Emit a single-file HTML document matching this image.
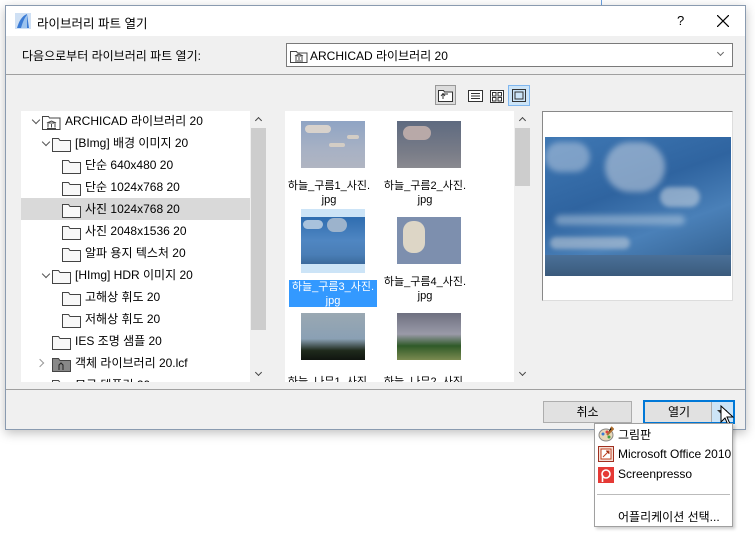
<!DOCTYPE html>
<html><head><meta charset="utf-8"><style>
*{box-sizing:border-box;margin:0;padding:0}
body{width:755px;height:533px;background:#fff;position:relative;overflow:hidden;font-family:"Liberation Sans","Noto Sans CJK KR",sans-serif;font-size:12px;color:#000}
.a{position:absolute}
.dlg{left:5px;top:5px;width:741px;height:425px;border:1px solid #8a9bb0;background:#f0f0f0;box-shadow:0 3px 10px rgba(0,0,0,.25)}
.tb{left:0;top:0;width:739px;height:30px;background:#fff}
.row{position:absolute;height:22px;line-height:22px;white-space:nowrap}
.fold{position:absolute}
.chev{position:absolute;width:6px;height:6px;border-right:1.5px solid #555;border-bottom:1.5px solid #555;transform:rotate(45deg)}
.th{position:absolute;width:64px;height:47px;overflow:hidden}
.cap{position:absolute;width:90px;text-align:center;line-height:14px;font-size:11px;white-space:nowrap}
</style></head><body>
<div class="a" style="left:601px;top:0;width:1px;height:5px;background:#6aa0e0"></div>
<div class="a dlg">
 <div class="a tb"></div>
 <svg class="a" style="left:9px;top:7px" width="16" height="16"><rect width="16" height="16" fill="#cfe0f4"/><path d="M2 15 C4 8 7 3 12 1 L14 15Z" fill="#3a7bd5"/><path d="M6 15 C8 8 10 4 12 2 L12 15Z" fill="#9cc3ee"/></svg>
 <div class="a" style="left:31px;top:7px;font-size:12.5px">라이브러리 파트 열기</div>
 <div class="a" style="left:671px;top:7px;font-size:13px">?</div>
 <svg class="a" style="left:711px;top:9px" width="12" height="12"><path d="M0 0L12 12M12 0L0 12" stroke="#000" stroke-width="1.2"/></svg>
 <div class="a" style="left:16px;top:41px">다음으로부터 라이브러리 파트 열기:</div>
 <div class="a" style="left:280px;top:37px;width:447px;height:24px;background:#fff;border:1px solid #7a7a7a"></div>
 <svg class="a" style="left:284px;top:43px" width="18" height="14"><path d="M.5 2.5h6l1 1.5h9.5v9.5h-16.5z" fill="#fff" stroke="#444"/><path d="M5 7l4-2 4 2zM6 8v3M9 8v3M12 8v3M5 12h8" stroke="#444" fill="none"/></svg>
 <div class="a" style="left:304px;top:41px">ARCHICAD 라이브러리 20</div>
 <div class="chev" style="left:712px;top:44px;width:5px;height:5px;border-color:#666;border-width:1px"></div>
 <div class="a" style="left:0;top:68px;width:739px;height:1px;background:#a0a0a0"></div>
 <!-- toolbar -->
 <div class="a" style="left:429px;top:79px;width:21px;height:20px;border:1px solid #999;background:#dcdcdc"></div>
 <svg class="a" style="left:432px;top:83px" width="16" height="13"><path d="M.5 1.5h5l1 1.5h8v9.5H.5z" fill="#fff" stroke="#333"/><path d="M5 10V5h5M3 7l2-2.5 2 2.5" stroke="#333" fill="none"/></svg>
 <svg class="a" style="left:462px;top:84px" width="15" height="12"><rect x=".5" y=".5" width="14" height="11" fill="#fff" stroke="#333"/><path d="M3 3.5h9M3 6h9M3 8.5h9" stroke="#333"/></svg>
 <svg class="a" style="left:484px;top:84px" width="14" height="13"><rect x=".5" y=".5" width="13" height="12" fill="#fff" stroke="#333"/><rect x="2.5" y="2.5" width="3.5" height="3.5" fill="none" stroke="#333"/><rect x="8" y="2.5" width="3.5" height="3.5" fill="none" stroke="#333"/><rect x="2.5" y="7.5" width="3.5" height="3.5" fill="none" stroke="#333"/><rect x="8" y="7.5" width="3.5" height="3.5" fill="none" stroke="#333"/></svg>
 <div class="a" style="left:502px;top:79px;width:22px;height:21px;border:1px solid #7fb6ef;background:#cce4f7"></div>
 <svg class="a" style="left:506px;top:83px" width="14" height="13"><rect x=".5" y=".5" width="13" height="12" fill="none" stroke="#333"/><rect x="3" y="3" width="8" height="7" fill="none" stroke="#333"/></svg>
 <!-- tree -->
 <div class="a" style="left:15px;top:105px;width:229px;height:271px;background:#fff;overflow:hidden">
  <div class="a" style="left:0;top:87px;width:229px;height:22px;background:#d9d9d9"></div>
  <div class="chev" style="left:12px;top:6px"></div>
  <svg class="a" style="left:21px;top:4px" width="19" height="15"><path d="M.5 1.5h6l1 1.5h10.5v11.5H.5z" fill="#fff" stroke="#444"/><path d="M5 8l4.5-2 4.5 2zM6 9v3.5M9.5 9v3.5M13 9v3.5M5 13.5h9" stroke="#444" fill="none"/></svg>
  <div class="row" style="left:44px;top:-1px">ARCHICAD 라이브러리 20</div>
  <div class="chev" style="left:22px;top:28px"></div>
  <svg class="fold" style="left:31px;top:26px" width="19" height="15"><path d="M.5 1.5h6l1.5 2h10.5v11H.5z" fill="#f8f8f8" stroke="#444"/></svg><div class="row" style="left:54px;top:21px">[BImg] 배경 이미지 20</div>
  <svg class="fold" style="left:41px;top:48px" width="19" height="15"><path d="M.5 1.5h6l1.5 2h10.5v11H.5z" fill="#f8f8f8" stroke="#444"/></svg><div class="row" style="left:64px;top:43px">단순 640x480 20</div>
  <svg class="fold" style="left:41px;top:70px" width="19" height="15"><path d="M.5 1.5h6l1.5 2h10.5v11H.5z" fill="#f8f8f8" stroke="#444"/></svg><div class="row" style="left:64px;top:65px">단순 1024x768 20</div>
  <svg class="fold" style="left:41px;top:92px" width="19" height="15"><path d="M.5 1.5h6l1.5 2h10.5v11H.5z" fill="#f8f8f8" stroke="#444"/></svg><div class="row" style="left:64px;top:87px">사진 1024x768 20</div>
  <svg class="fold" style="left:41px;top:114px" width="19" height="15"><path d="M.5 1.5h6l1.5 2h10.5v11H.5z" fill="#f8f8f8" stroke="#444"/></svg><div class="row" style="left:64px;top:109px">사진 2048x1536 20</div>
  <svg class="fold" style="left:41px;top:136px" width="19" height="15"><path d="M.5 1.5h6l1.5 2h10.5v11H.5z" fill="#f8f8f8" stroke="#444"/></svg><div class="row" style="left:64px;top:131px">알파 용지 텍스처 20</div>
  <div class="chev" style="left:22px;top:160px"></div>
  <svg class="fold" style="left:31px;top:158px" width="19" height="15"><path d="M.5 1.5h6l1.5 2h10.5v11H.5z" fill="#f8f8f8" stroke="#444"/></svg><div class="row" style="left:54px;top:153px">[HImg] HDR 이미지 20</div>
  <svg class="fold" style="left:41px;top:180px" width="19" height="15"><path d="M.5 1.5h6l1.5 2h10.5v11H.5z" fill="#f8f8f8" stroke="#444"/></svg><div class="row" style="left:64px;top:175px">고해상 휘도 20</div>
  <svg class="fold" style="left:41px;top:202px" width="19" height="15"><path d="M.5 1.5h6l1.5 2h10.5v11H.5z" fill="#f8f8f8" stroke="#444"/></svg><div class="row" style="left:64px;top:197px">저해상 휘도 20</div>
  <svg class="fold" style="left:31px;top:224px" width="19" height="15"><path d="M.5 1.5h6l1.5 2h10.5v11H.5z" fill="#f8f8f8" stroke="#444"/></svg><div class="row" style="left:54px;top:219px">IES 조명 샘플 20</div>
  <div class="chev" style="left:16px;top:249px;transform:rotate(-45deg);border-color:#999"></div>
  <svg class="fold" style="left:31px;top:246px" width="19" height="15"><path d="M.5 1.5h6l1.5 2h10.5v11H.5z" fill="#888" stroke="#444"/><path d="M7 13V8l2-2 2 2v5" stroke="#222" fill="none"/></svg><div class="row" style="left:54px;top:241px">객체 라이브러리 20.lcf</div>
  <svg class="fold" style="left:31px;top:268px" width="19" height="15"><path d="M.5 1.5h6l1.5 2h10.5v11H.5z" fill="#f8f8f8" stroke="#444"/></svg><div class="row" style="left:54px;top:263px">모국 템플릿 20</div>
 </div>
 <div class="a" style="left:244px;top:105px;width:16px;height:271px;background:#f0f0f0"></div>
 <div class="a" style="left:245px;top:122px;width:15px;height:202px;background:#cdcdcd"></div>
 <div class="chev" style="left:250px;top:112px;transform:rotate(-135deg);width:5px;height:5px;border-color:#444"></div>
 <div class="chev" style="left:250px;top:364px;width:5px;height:5px;border-color:#444"></div>
 <!-- thumbs -->
 <div class="a" style="left:279px;top:105px;width:229px;height:271px;background:#fff;overflow:hidden">
  <div class="th" style="left:16px;top:10px;background:linear-gradient(#8fa4c4,#a7b1c4 60%,#b0b5c2);"><div class="a" style="left:4px;top:4px;width:26px;height:8px;border-radius:4px;background:#d8d2cc"></div><div class="a" style="left:28px;top:22px;width:16px;height:4px;border-radius:3px;background:#d3cdc5"></div><div class="a" style="left:46px;top:14px;width:12px;height:4px;border-radius:3px;background:#d3cdc5"></div></div>
  <div class="th" style="left:112px;top:10px;background:linear-gradient(#5e6a80,#7a7d88 70%,#8a8a90)"><div class="a" style="left:6px;top:5px;width:28px;height:14px;border-radius:7px;background:#b8a9a8"></div></div>
  <div class="cap" style="left:-1px;top:68px">하늘_구름1_사진.<br>jpg</div>
  <div class="cap" style="left:95px;top:68px">하늘_구름2_사진.<br>jpg</div>
  <div class="a" style="left:16px;top:98px;width:64px;height:64px;background:#cce4f7"></div>
  <div class="th" style="left:16px;top:106px;background:linear-gradient(#2f6db0,#4f86c2 50%,#4a7eb6 80%,#3b6a9c)"><div class="a" style="left:2px;top:3px;width:20px;height:9px;border-radius:5px;background:#a9c2dc"></div><div class="a" style="left:26px;top:1px;width:20px;height:14px;border-radius:7px;background:#9cb3cc"></div></div>
  <div class="th" style="left:112px;top:106px;background:#7d8fae"><div class="a" style="left:6px;top:4px;width:22px;height:32px;border-radius:10px;background:#ddd6c6"></div></div>
  <div class="a" style="left:4px;top:169px;width:88px;height:27px;background:#3399ff"></div>
  <div class="cap" style="left:3px;top:169px;color:#fff">하늘_구름3_사진.<br>jpg</div>
  <div class="cap" style="left:95px;top:164px">하늘_구름4_사진.<br>jpg</div>
  <div class="th" style="left:16px;top:202px;background:linear-gradient(#9aa8b2,#8aa0b4 55%,#1f2a1c 80%,#101510)"></div>
  <div class="th" style="left:112px;top:202px;background:linear-gradient(#6e7080,#9a9aa8 45%,#2f5a28 70%,#7a8a50)"></div>
  <div class="cap" style="left:-1px;top:264px">하늘_나무1_사진.</div>
  <div class="cap" style="left:95px;top:264px">하늘_나무2_사진.</div>
 </div>
 <div class="a" style="left:508px;top:105px;width:16px;height:271px;background:#f0f0f0"></div>
 <div class="a" style="left:509px;top:122px;width:15px;height:58px;background:#cdcdcd"></div>
 <div class="chev" style="left:514px;top:112px;transform:rotate(-135deg);width:5px;height:5px;border-color:#444"></div>
 <div class="chev" style="left:514px;top:364px;width:5px;height:5px;border-color:#444"></div>
 <!-- preview -->
 <div class="a" style="left:536px;top:105px;width:191px;height:190px;background:#fff;border:1px solid #888;border-right-color:#ddd;border-bottom-color:#ddd"></div>
 <div class="a" style="left:539px;top:131px;width:186px;height:139px;overflow:hidden;background:linear-gradient(160deg,#3f78b4,#2f64a0 40%,#4a80b8 65%,#3a6a9c 85%,#34587c)">
  <div class="a" style="left:60px;top:5px;width:60px;height:50px;border-radius:25px;background:rgba(200,212,226,.55);filter:blur(3px)"></div>
  <div class="a" style="left:0;top:5px;width:45px;height:30px;border-radius:15px;background:rgba(210,220,232,.45);filter:blur(3px)"></div>
  <div class="a" style="left:115px;top:50px;width:40px;height:20px;border-radius:10px;background:rgba(220,226,232,.5);filter:blur(2px)"></div>
  <div class="a" style="left:10px;top:78px;width:130px;height:10px;border-radius:5px;background:rgba(200,214,228,.45);filter:blur(3px)"></div>
  <div class="a" style="left:5px;top:100px;width:80px;height:12px;border-radius:6px;background:rgba(210,216,222,.5);filter:blur(2px)"></div>
  <div class="a" style="left:0;top:118px;width:186px;height:21px;background:linear-gradient(#4a7098,#3a5a7c)"></div>
 </div>
 <!-- bottom -->
 <div class="a" style="left:0;top:383px;width:739px;height:1px;background:#a0a0a0"></div>
 <div class="a" style="left:537px;top:395px;width:89px;height:22px;border:1px solid #adadad;background:#e1e1e1;text-align:center;line-height:20px">취소</div>
 <div class="a" style="left:637px;top:394px;width:92px;height:24px;border:2px solid #0078d7;background:#e1e1e1"></div>
 <div class="a" style="left:637px;top:395px;width:72px;line-height:22px;text-align:center">열기</div>
 <div class="a" style="left:705px;top:396px;width:22px;height:20px;background:#cce4f7;border-left:1px solid #aaa"></div>
 <div class="a" style="left:711px;top:404px;width:0;height:0;border-left:5px solid transparent;border-right:5px solid transparent;border-top:5px solid #333"></div>
</div>
<svg class="a" style="left:720px;top:405px" width="14" height="22"><path d="M1 1v16l4-4 3 7 2-1-3-7h6z" fill="#fff" stroke="#000"/></svg>
<!-- menu -->
<div class="a" style="left:594px;top:423px;width:139px;height:104px;background:#fff;border:1px solid #a0a0a0;box-shadow:2px 2px 3px rgba(0,0,0,.2)"></div>
<svg class="a" style="left:598px;top:426px" width="16" height="16"><ellipse cx="8" cy="9" rx="7" ry="6" fill="#e8d8b8" stroke="#888"/><circle cx="5" cy="8" r="1.5" fill="#3a7bd5"/><circle cx="9" cy="6" r="1.5" fill="#e04040"/><circle cx="11" cy="11" r="1.5" fill="#40a040"/><path d="M13 1l2 2-6 6" stroke="#b07030" stroke-width="2"/></svg>
<div class="a" style="left:618px;top:426px">그림판</div>
<svg class="a" style="left:598px;top:446px" width="16" height="16"><rect x=".5" y=".5" width="15" height="15" fill="#f3e0d8" stroke="#a03020"/><rect x="3" y="3" width="10" height="10" fill="#fff" stroke="#c04020"/><path d="M5 11l6-6M8 5h3v3" stroke="#c04020"/></svg>
<div class="a" style="left:618px;top:447px">Microsoft Office 2010</div>
<svg class="a" style="left:598px;top:467px" width="16" height="16"><rect width="16" height="16" fill="#e53935"/><circle cx="8" cy="7" r="4" fill="none" stroke="#fff" stroke-width="1.6"/><path d="M4.5 8v7" stroke="#fff" stroke-width="1.6"/></svg>
<div class="a" style="left:618px;top:467px">Screenpresso</div>
<div class="a" style="left:597px;top:494px;width:133px;height:1px;background:#bbb"></div>
<div class="a" style="left:618px;top:508px">어플리케이션 선택...</div>
</body></html>
